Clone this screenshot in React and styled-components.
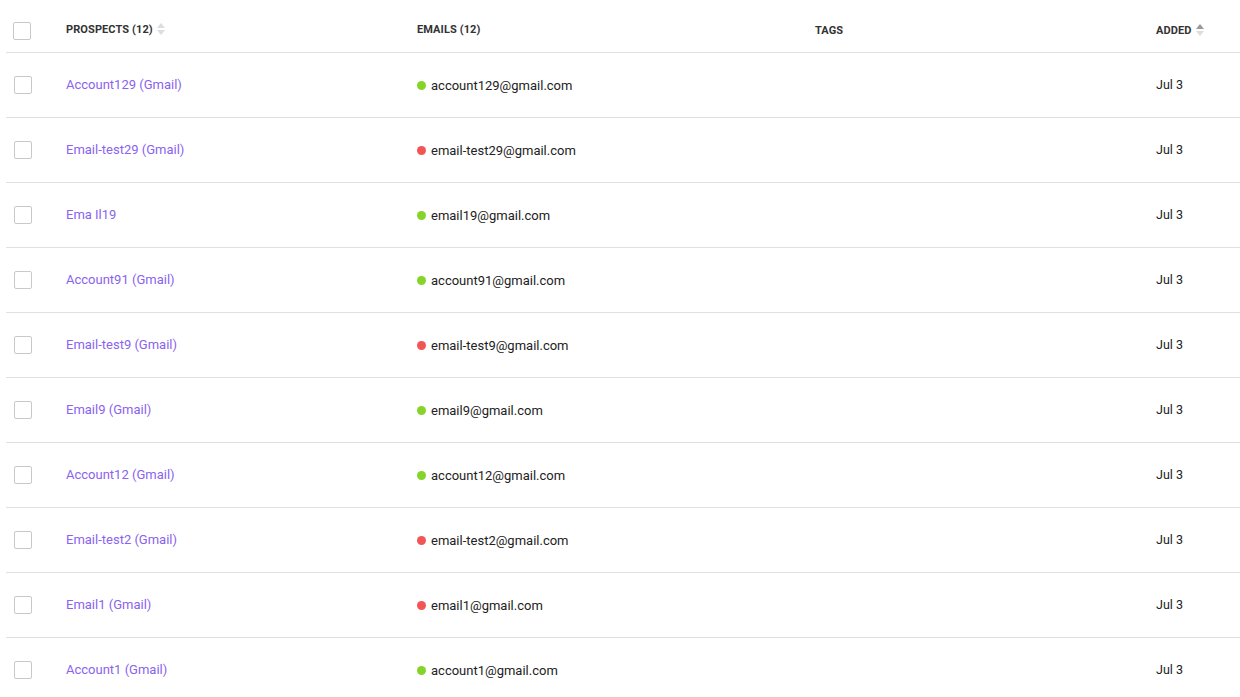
import React from 'react';
import styled, { createGlobalStyle } from 'styled-components';

const GlobalStyle = createGlobalStyle`
  html, body {
    margin: 0;
    padding: 0;
    background: #fff;
    font-family: Roboto, "Liberation Sans", Arial, sans-serif;
    color: #222;
  }
`;

const Page = styled.div`
  padding-left: 6px;
  overflow: hidden;
  height: 697px;
`;

const Row = styled.div`
  display: grid;
  grid-template-columns: 60px 351px 398px 341px 1fr;
  align-items: center;
  height: ${p => (p.$head ? '52px' : '64px')};
  border-bottom: 1px solid #e0e0e0;
`;

const HeadCell = styled.div`
  display: flex;
  align-items: center;
  gap: 4px;
  font-size: 11px;
  font-weight: 700;
  color: #333;
  text-transform: uppercase;
  letter-spacing: 0.1px;
  margin-top: ${p => p.$offset || 0}px;
`;

const CheckCell = styled.div`
  display: flex;
  align-items: center;
  padding-left: ${p => (p.$head ? '7px' : '8px')};
  margin-top: ${p => (p.$head ? '10px' : '0')};
`;

const Box = styled.span`
  display: block;
  width: 16px;
  height: 16px;
  border: 1px solid #c9c9c9;
  border-radius: 2px;
  background: #fff;
`;

const Name = styled.a`
  font-size: 13px;
  color: #8a63ee;
  text-decoration: none;
  cursor: pointer;
  margin-top: -1px;
`;

const Email = styled.div`
  display: flex;
  align-items: center;
  gap: 5px;
  font-size: 13px;
  color: #222;
`;

const Dot = styled.span`
  width: 9px;
  height: 9px;
  border-radius: 50%;
  background: ${p => (p.$ok ? '#86d42a' : '#f25555')};
`;

const Plain = styled.div`
  font-size: 12.5px;
  color: #222;
  margin-top: -1px;
`;

const SortIcon = ({ active }) => (
  <svg width="8" height="12" viewBox="0 0 8 12">
    <path d="M4 0 L8 5 L0 5 Z" fill={active ? '#999' : '#ddd'} />
    <path d="M4 12 L8 7 L0 7 Z" fill="#ddd" />
  </svg>
);

const prospects = [
  ['Account129 (Gmail)', 'account129@gmail.com', true],
  ['Email-test29 (Gmail)', 'email-test29@gmail.com', false],
  ['Ema Il19', 'email19@gmail.com', true],
  ['Account91 (Gmail)', 'account91@gmail.com', true],
  ['Email-test9 (Gmail)', 'email-test9@gmail.com', false],
  ['Email9 (Gmail)', 'email9@gmail.com', true],
  ['Account12 (Gmail)', 'account12@gmail.com', true],
  ['Email-test2 (Gmail)', 'email-test2@gmail.com', false],
  ['Email1 (Gmail)', 'email1@gmail.com', false],
  ['Account1 (Gmail)', 'account1@gmail.com', true],
];

export default function App() {
  return (
    <Page>
      <GlobalStyle />
      <Row $head>
        <CheckCell $head><Box /></CheckCell>
        <HeadCell $offset={6}>Prospects (12) <SortIcon /></HeadCell>
        <HeadCell $offset={6}>Emails (12)</HeadCell>
        <HeadCell $offset={8}>Tags</HeadCell>
        <HeadCell $offset={8}>Added <SortIcon active /></HeadCell>
      </Row>
      {prospects.map(([name, email, ok]) => (
        <Row key={email}>
          <CheckCell><Box /></CheckCell>
          <Name>{name}</Name>
          <Email><Dot $ok={ok} />{email}</Email>
          <div />
          <Plain>Jul 3</Plain>
        </Row>
      ))}
    </Page>
  );
}
